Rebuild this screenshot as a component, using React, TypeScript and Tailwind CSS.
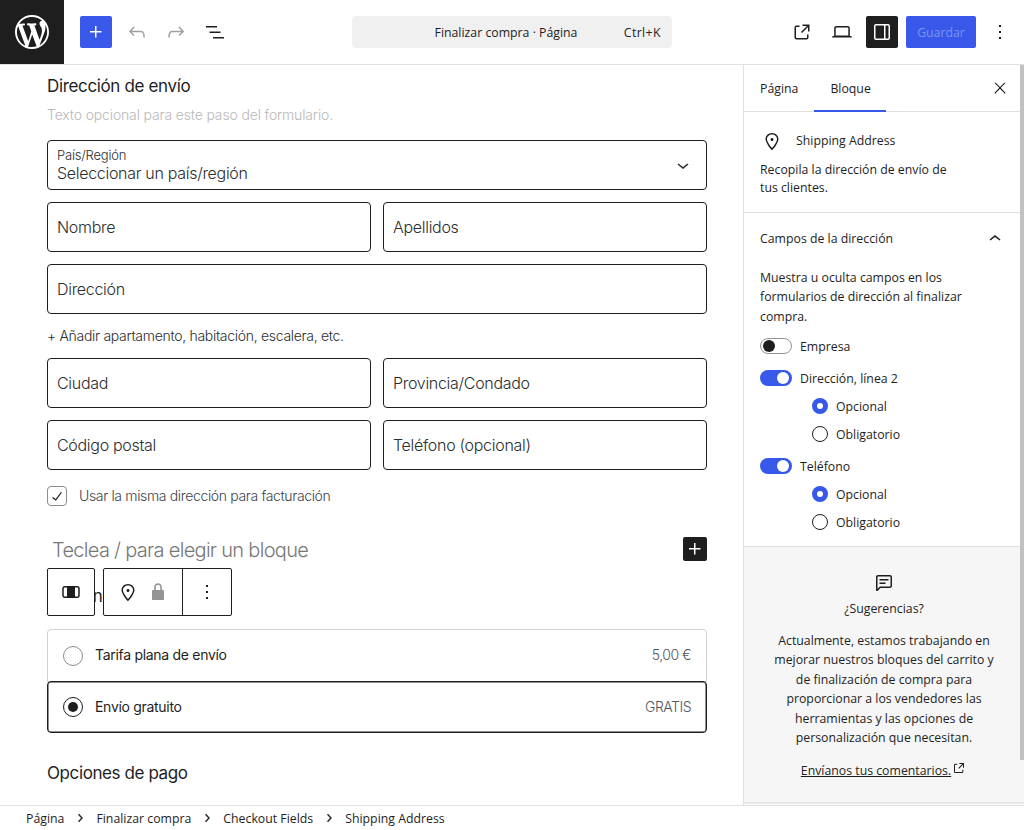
import React from "react";

const ui = "font-['Open_Sans','Noto_Sans',sans-serif]";
const ct = "font-['Inter',sans-serif]";

function I({ d, s = 24, c = "" }: { d: string | string[]; s?: number; c?: string }) {
  const ds = Array.isArray(d) ? d : [d];
  return (
    <svg viewBox="0 0 24 24" width={s} height={s} className={"shrink-0 fill-current " + c}>
      {ds.map((p, i) => (
        <path key={i} d={p} />
      ))}
    </svg>
  );
}

const P = {
  plus: "M11 12.5V17.5H12.5V12.5H17.5V11H12.5V6H11V11H6V12.5H11Z",
  undo: "M18.3 11.7c-.6-.6-1.4-.9-2.3-.9H6.7l2.9-3.3-1.1-1-4.5 5L8.5 16l1-1-2.7-2.7H16c.5 0 .9.2 1.3.5 1 1 1 3.4 1 4.5v.3h1.5v-.2c0-1.5 0-4.3-1.5-5.7z",
  redo: "M15.6 6.5l-1.1 1 2.9 3.3H8c-.9 0-1.7.3-2.3.9-1.4 1.5-1.4 4.2-1.4 5.6v.2h1.5v-.3c0-1.1 0-3.5 1-4.5.3-.3.7-.5 1.3-.5h9.2L14.5 15l1.1 1.1 4.6-4.6-4.6-5z",
  list: "M3 6h11v1.5H3V6Zm3.5 5.5h11V13h-11v-1.5ZM21 17H10v1.5h11V17Z",
  ext: "M19.5 4.5h-7V6h4.44l-5.97 5.97 1.06 1.06L18 7.06v4.44h1.5v-7Zm-13 1a2 2 0 0 0-2 2v10a2 2 0 0 0 2 2h10a2 2 0 0 0 2-2v-3H17v3a.5.5 0 0 1-.5.5h-10a.5.5 0 0 1-.5-.5v-10a.5.5 0 0 1 .5-.5h3V5.5h-3Z",
  laptop: "M20.5 16h-.7V8c0-1.1-.9-2-2-2H6.2c-1.1 0-2 .9-2 2v8h-.7c-.8 0-1.5.7-1.5 1.5h20c0-.8-.7-1.5-1.5-1.5zM5.7 8c0-.3.2-.5.5-.5h11.6c.3 0 .5.2.5.5v7.6H5.7V8z",
  drawer: "M18 4H6c-1.1 0-2 .9-2 2v12c0 1.1.9 2 2 2h12c1.1 0 2-.9 2-2V6c0-1.1-.9-2-2-2zm-4 14.5H6c-.3 0-.5-.2-.5-.5V6c0-.3.2-.5.5-.5h8v13zm4.5-.5c0 .3-.2.5-.5.5h-2.5v-13H18c.3 0 .5.2.5.5v12z",
  more: "M13 19h-2v-2h2v2zm0-6h-2v-2h2v2zm0-6h-2V5h2v2z",
  close: "M13 11.8l6.1-6.3-1-1-6.1 6.2-6.1-6.2-1 1 6.1 6.3-6.5 6.7 1 1 6.5-6.6 6.5 6.6 1-1z",
  up: "M6.5 12.4L12 8l5.5 4.4-.9 1.2L12 10l-4.5 3.6-1-1.2z",
  down: "M17.5 11.6L12 16l-5.5-4.4.9-1.2L12 14l4.5-3.6 1 1.2z",
  right: "M10.6 6L9.4 7l4.6 5-4.6 5 1.2 1 5.4-6z",
  pin: "M12 9c-.8 0-1.5.7-1.5 1.5S11.2 12 12 12s1.5-.7 1.5-1.5S12.8 9 12 9zm0-5c-3.6 0-6.5 2.8-6.5 6.2 0 .8.3 1.8.9 3.1.5 1.1 1.2 2.3 2 3.6.7 1 3 3.8 3.2 3.9l.4.5.4-.5c.2-.2 2.6-2.9 3.2-3.9.8-1.2 1.5-2.5 2-3.6.6-1.3.9-2.3.9-3.1C18.5 6.8 15.6 4 12 4zm4.3 8.7c-.5 1-1.1 2.2-1.9 3.4-.5.7-1.7 2.2-2.4 3-.7-.8-1.9-2.3-2.4-3-.8-1.2-1.4-2.3-1.9-3.3-.6-1.4-.7-2.2-.7-2.5 0-2.6 2.2-4.7 5-4.7s5 2.1 5 4.7c0 .3-.1 1.1-.7 2.4z",
  lock: "M17 10h-1.2V7c0-2.1-1.7-3.8-3.8-3.8-2.1 0-3.8 1.7-3.8 3.8v3H7c-.6 0-1 .4-1 1v8c0 .6.4 1 1 1h10c.6 0 1-.4 1-1v-8c0-.6-.4-1-1-1zm-2.8 0H9.8V7c0-1.2 1-2.2 2.2-2.2s2.2 1 2.2 2.2v3z",
  comment: "M18 4H6c-1.1 0-2 .9-2 2v12.9c0 .6.5 1.1 1.1 1.1.3 0 .5-.1.8-.3L8.5 17H18c1.1 0 2-.9 2-2V6c0-1.1-.9-2-2-2zm.5 11c0 .3-.2.5-.5.5H7.9l-2.4 2.4V6c0-.3.2-.5.5-.5h12c.3 0 .5.2.5.5v9z",
  commentLines: "M7.5 8h9v1.5h-9zm0 3.5h6V13h-6z",
  check: "M16.7 7.1l-6.3 8.5-3.3-2.5-.9 1.2 4.5 3.4L17.9 7.9z",
};

function WpLogo() {
  return (
    <svg viewBox="0 0 20 20" width={34} height={34} className="fill-white">
      <path d="M20 10c0-5.51-4.49-10-10-10C4.48 0 0 4.49 0 10c0 5.52 4.48 10 10 10 5.51 0 10-4.48 10-10zM7.78 15.37L4.37 6.22c.55-.02 1.17-.08 1.17-.08.5-.06.44-1.13-.06-1.11 0 0-1.45.11-2.37.11-.18 0-.37 0-.58-.01C4.12 2.69 6.87 1.11 10 1.11c2.33 0 4.45.87 6.05 2.34-.68-.11-1.65.39-1.65 1.58 0 .74.45 1.36.9 2.1.35.61.55 1.36.55 2.46 0 1.49-1.4 5-1.4 5l-3.03-8.37c.54-.02.82-.17.82-.17.5-.05.44-1.25-.06-1.22 0 0-1.44.12-2.38.12-.87 0-2.33-.12-2.33-.12-.5-.03-.56 1.2-.06 1.22l.92.08 1.26 3.41zM17.41 10c.24-.64.74-1.87.43-4.25.7 1.29 1.05 2.71 1.05 4.25 0 3.29-1.73 6.24-4.4 7.78.97-2.59 1.94-5.2 2.92-7.78zM6.1 18.09C3.12 16.65 1.11 13.53 1.11 10c0-1.3.23-2.48.72-3.59C3.25 10.3 4.67 14.2 6.1 18.09zm4.03-6.63l2.58 6.98c-.86.29-1.76.45-2.71.45-.79 0-1.57-.11-2.29-.33.81-2.38 1.62-4.74 2.42-7.1z" />
    </svg>
  );
}

function Field({ label, cls = "" }: { label: string; cls?: string }) {
  return (
    <div className={"h-[50px] flex items-center px-[9px] border border-[#1e1e1e] rounded-[4px] text-[16px] font-light text-[#2b2d2f] tracking-[-0.3px] " + cls}>
      {label}
    </div>
  );
}

function Toggle({ on, label }: { on: boolean; label: string }) {
  return (
    <div className="flex items-center gap-2 h-4">
      {on ? (
        <div className="w-8 h-4 rounded-full bg-[#3858e9] flex items-center justify-end pr-[3px]">
          <div className="w-3 h-3 rounded-full bg-white" />
        </div>
      ) : (
        <div className="w-8 h-4 rounded-full border border-[#949494] flex items-center pl-[2px]">
          <div className="w-3 h-3 rounded-full bg-[#1e1e1e]" />
        </div>
      )}
      <span className="pt-[2px]">{label}</span>
    </div>
  );
}

function Radio({ on, label }: { on: boolean; label: string }) {
  return (
    <div className="flex items-center gap-2 h-4 pl-[52px]">
      {on ? (
        <div className="w-4 h-4 rounded-full bg-[#3858e9] flex items-center justify-center">
          <div className="w-[6px] h-[6px] rounded-full bg-white" />
        </div>
      ) : (
        <div className="w-4 h-4 rounded-full border border-[#1e1e1e]" />
      )}
      <span className="pt-[2px]">{label}</span>
    </div>
  );
}

export default function App() {
  return (
    <div className={"relative w-[1024px] h-[830px] overflow-hidden bg-white flex flex-col text-[#1e1e1e] text-[12.3px] " + ui}>
      <header className="h-[65px] shrink-0 flex items-center border-b border-[#e0e0e0]">
        <div className="w-16 h-16 bg-[#1e1e1e] flex items-center justify-center shrink-0">
          <WpLogo />
        </div>
        <div className="w-[288px] shrink-0 flex items-center pl-4">
          <div className="w-8 h-8 bg-[#3858e9] text-white rounded-[2px] flex items-center justify-center">
            <I d={P.plus} />
          </div>
          <div className="w-8 h-8 ml-[9px] flex items-center justify-center text-[#a0a0a0]"><I d={P.undo} /></div>
          <div className="w-8 h-8 ml-[7px] flex items-center justify-center text-[#a0a0a0]"><I d={P.redo} /></div>
          <div className="w-8 h-8 ml-[7px] flex items-center justify-center"><I d={P.list} /></div>
        </div>
        <div className="w-[320px] h-8 shrink-0 bg-[#f0f0f0] rounded-[4px] relative flex items-center justify-center pr-[12px] pt-[2px]">
          <span>Finalizar compra · Página</span>
          <span className="absolute right-[11px] tracking-[0.4px]">Ctrl+K</span>
        </div>
        <div className="flex-1 flex items-center justify-end pr-2">
          <div className="w-8 h-8 flex items-center justify-center"><I d={P.ext} /></div>
          <div className="w-8 h-8 ml-2 flex items-center justify-center"><I d={P.laptop} /></div>
          <div className="w-8 h-8 ml-2 rounded-[2px] bg-[#1e1e1e] text-white flex items-center justify-center"><I d={P.drawer} /></div>
          <div className="w-[70px] h-8 ml-2 rounded-[2px] bg-[#3858e9] text-[#7b93f5] flex items-center justify-center pt-[2px]">Guardar</div>
          <div className="w-8 h-8 ml-2 flex items-center justify-center"><I d={P.more} /></div>
        </div>
      </header>

      <div className="flex-1 min-h-0 flex">
        <main className={"relative flex-1 min-w-0 overflow-hidden pl-[47px] pr-[36px] text-[#2b2d2f] " + ct}>
          <h2 className="h-[22px] mt-[10px] text-[17px] leading-[22px] tracking-[-0.35px] text-[#1e1e1e]">Dirección de envío</h2>
          <p className="mt-[8px] h-5 text-[14px] font-light leading-5 text-[#b8b8b8] tracking-[-0.15px]">Texto opcional para este paso del formulario.</p>
          <div className="mt-[15px] h-[50px] border border-[#1e1e1e] rounded-[4px] pl-[9px] pr-[11px] flex items-center justify-between font-light">
            <div>
              <div className="text-[13px] leading-[14px] tracking-[-0.2px]">País/Región</div>
              <div className="mt-px text-[16px] leading-[20px] tracking-[-0.3px]">Seleccionar un país/región</div>
            </div>
            <I d={P.down} />
          </div>
          <div className="mt-3 grid grid-cols-2 gap-3">
            <Field label="Nombre" />
            <Field label="Apellidos" />
          </div>
          <Field label="Dirección" cls="mt-3" />
          <p className="mt-[12px] h-5 text-[14px] font-light leading-5 tracking-[-0.3px]">+ Añadir apartamento, habitación, escalera, etc.</p>
          <div className="mt-3 grid grid-cols-2 gap-3">
            <Field label="Ciudad" />
            <Field label="Provincia/Condado" />
          </div>
          <div className="mt-3 grid grid-cols-2 gap-3">
            <Field label="Código postal" />
            <Field label="Teléfono (opcional)" />
          </div>
          <div className="mt-4 h-5 flex items-center gap-3 text-[14px] font-light tracking-[-0.35px] text-[#3c434a]">
            <div className="w-5 h-5 border border-[#8c8c8c] rounded-[4px] flex items-center justify-center text-[#1e1e1e]">
              <I d={P.check} s={20} />
            </div>
            <span className="-mt-[2px]">Usar la misma dirección para facturación</span>
          </div>
          <div className="mt-[31px] h-6 flex items-center justify-between pl-[5px]">
            <span className="mt-[2px] text-[20px] font-light tracking-[-0.7px] text-[#777]">Teclea / para elegir un bloque</span>
            <div className="w-6 h-6 rounded-[2px] bg-[#1e1e1e] text-white flex items-center justify-center"><I d={P.plus} /></div>
          </div>
          <h2 className="mt-[24px] h-[22px] text-[17px] leading-[22px] tracking-[-0.35px] text-[#1e1e1e]">Opciones de envío</h2>
          <div className="mt-[22px] text-[14px] tracking-[-0.3px]">
            <div className="h-[53px] -mb-px border border-[#d0d0d0] rounded-t-[4px] flex items-center justify-between pl-[15px] pr-[15px] text-[#1e1e1e]">
              <span className="flex items-center gap-3">
                <span className="w-5 h-5 rounded-full border border-[#8c8c8c]" />
                <span className="-mt-[2px]">Tarifa plana de envío</span>
              </span>
              <span className="text-[#50575e] font-light tracking-[-0.5px] -mt-[2px]">5,00 €</span>
            </div>
            <div className="relative h-[52px] border border-[#1e1e1e] rounded-[4px] shadow-[inset_0_0_0_0.5px_#1e1e1e] flex items-center justify-between pl-[15px] pr-[15px] text-[#1e1e1e]">
              <span className="flex items-center gap-3">
                <span className="w-5 h-5 rounded-full border border-[#1e1e1e] flex items-center justify-center">
                  <span className="w-[10px] h-[10px] rounded-full bg-[#1e1e1e]" />
                </span>
                <span className="-mt-[2px]">Envío gratuito</span>
              </span>
              <span className="text-[#50575e] font-light tracking-[-0.5px] -mt-[2px]">GRATIS</span>
            </div>
          </div>
          <h2 className="mt-[29px] h-[22px] text-[17px] leading-[22px] tracking-[-0.4px] text-[#1e1e1e]">Opciones de pago</h2>

          <div className="absolute left-[47px] top-[503px] flex gap-2 text-[#1e1e1e]">
            <div className="w-12 h-12 bg-white border border-[#1e1e1e] rounded-[2px] flex items-center justify-center">
              <svg viewBox="0 0 18 14" width={18} height={14}>
                <rect x="1" y="1.75" width="16" height="10.5" rx="2" fill="none" stroke="#1e1e1e" strokeWidth="1.5" />
                <rect x="5" y="1.75" width="8" height="10.5" fill="#1e1e1e" />
              </svg>
            </div>
            <div className="h-12 bg-white border border-[#1e1e1e] rounded-[2px] flex items-center">
              <div className="w-[79px] h-full flex items-center pl-3 gap-[6px] border-r border-[#1e1e1e]">
                <I d={P.pin} />
                <I d={P.lock} c="text-[#949494]" />
              </div>
              <div className="w-[48px] flex items-center justify-center"><I d={P.more} /></div>
            </div>
          </div>
        </main>

        <aside className="w-[281px] shrink-0 relative border-l border-[#e0e0e0] flex flex-col">
          <div className="h-[47px] shrink-0 flex items-center border-b border-[#e0e0e0] relative pl-4 pr-[15px]">
            <span className="pt-[2px]">Página</span>
            <span className="ml-[32px] pt-[2px]">Bloque</span>
            <div className="absolute left-[70px] bottom-[-1px] w-[72px] h-[2px] bg-[#3858e9]" />
            <div className="ml-auto"><I d={P.close} s={18} /></div>
          </div>
          <section className="h-[101px] shrink-0 border-b border-[#e0e0e0] pl-4 pr-5">
            <div className="mt-[17px] h-6 flex items-center gap-3">
              <I d={P.pin} />
              <span>Shipping Address</span>
            </div>
            <p className="mt-[8px] w-[200px] leading-[18px]">Recopila la dirección de envío de tus clientes.</p>
          </section>
          <section className="h-[334px] shrink-0 border-b border-[#e0e0e0] pl-4 pr-[17px]">
            <div className="mt-[16px] h-5 flex items-center justify-between">
              <span>Campos de la dirección</span>
              <I d={P.up} />
            </div>
            <p className="mt-[19px] w-[210px] leading-[19.4px]">Muestra u oculta campos en los formularios de dirección al finalizar compra.</p>
            <div className="mt-[12px] flex flex-col gap-4">
              <Toggle on={false} label="Empresa" />
              <Toggle on label="Dirección, línea 2" />
            </div>
            <div className="mt-3 flex flex-col gap-3">
              <Radio on label="Opcional" />
              <Radio on={false} label="Obligatorio" />
            </div>
            <div className="mt-4"><Toggle on label="Teléfono" /></div>
            <div className="mt-3 flex flex-col gap-3">
              <Radio on label="Opcional" />
              <Radio on={false} label="Obligatorio" />
            </div>
          </section>
          <section className="h-[257px] shrink-0 bg-[#f6f6f6] border-b-2 border-[#e8e8e8] flex flex-col items-center text-center px-4 pt-[24px]">
            <I d={[P.comment, P.commentLines]} />
            <div className="mt-[4px] leading-5">¿Sugerencias?</div>
            <p className="mt-[12px] w-[228px] leading-[19.4px]">Actualmente, estamos trabajando en mejorar nuestros bloques del carrito y de finalización de compra para proporcionar a los vendedores las herramientas y las opciones de personalización que necesitan.</p>
            <div className="mt-[15px] flex items-start">
              <span className="underline">Envíanos tus comentarios.</span>
              <I d={P.ext} s={16} c="-mt-[2px]" />
            </div>
          </section>
          <div className="absolute right-0 top-0 w-1 h-[695px] bg-[#c1c1c1]" />
        </aside>
      </div>

      <footer className="h-[25px] shrink-0 border-t border-[#e0e0e0] flex items-center pl-[26px]">
        <span className="pt-[2px]">Página</span>
        <I d={P.right} s={16} c="mx-2 stroke-current stroke-[0.7]" />
        <span className="pt-[2px]">Finalizar compra</span>
        <I d={P.right} s={16} c="mx-2 stroke-current stroke-[0.7]" />
        <span className="pt-[2px]">Checkout Fields</span>
        <I d={P.right} s={16} c="mx-2 stroke-current stroke-[0.7]" />
        <span className="pt-[2px]">Shipping Address</span>
      </footer>
    </div>
  );
}
